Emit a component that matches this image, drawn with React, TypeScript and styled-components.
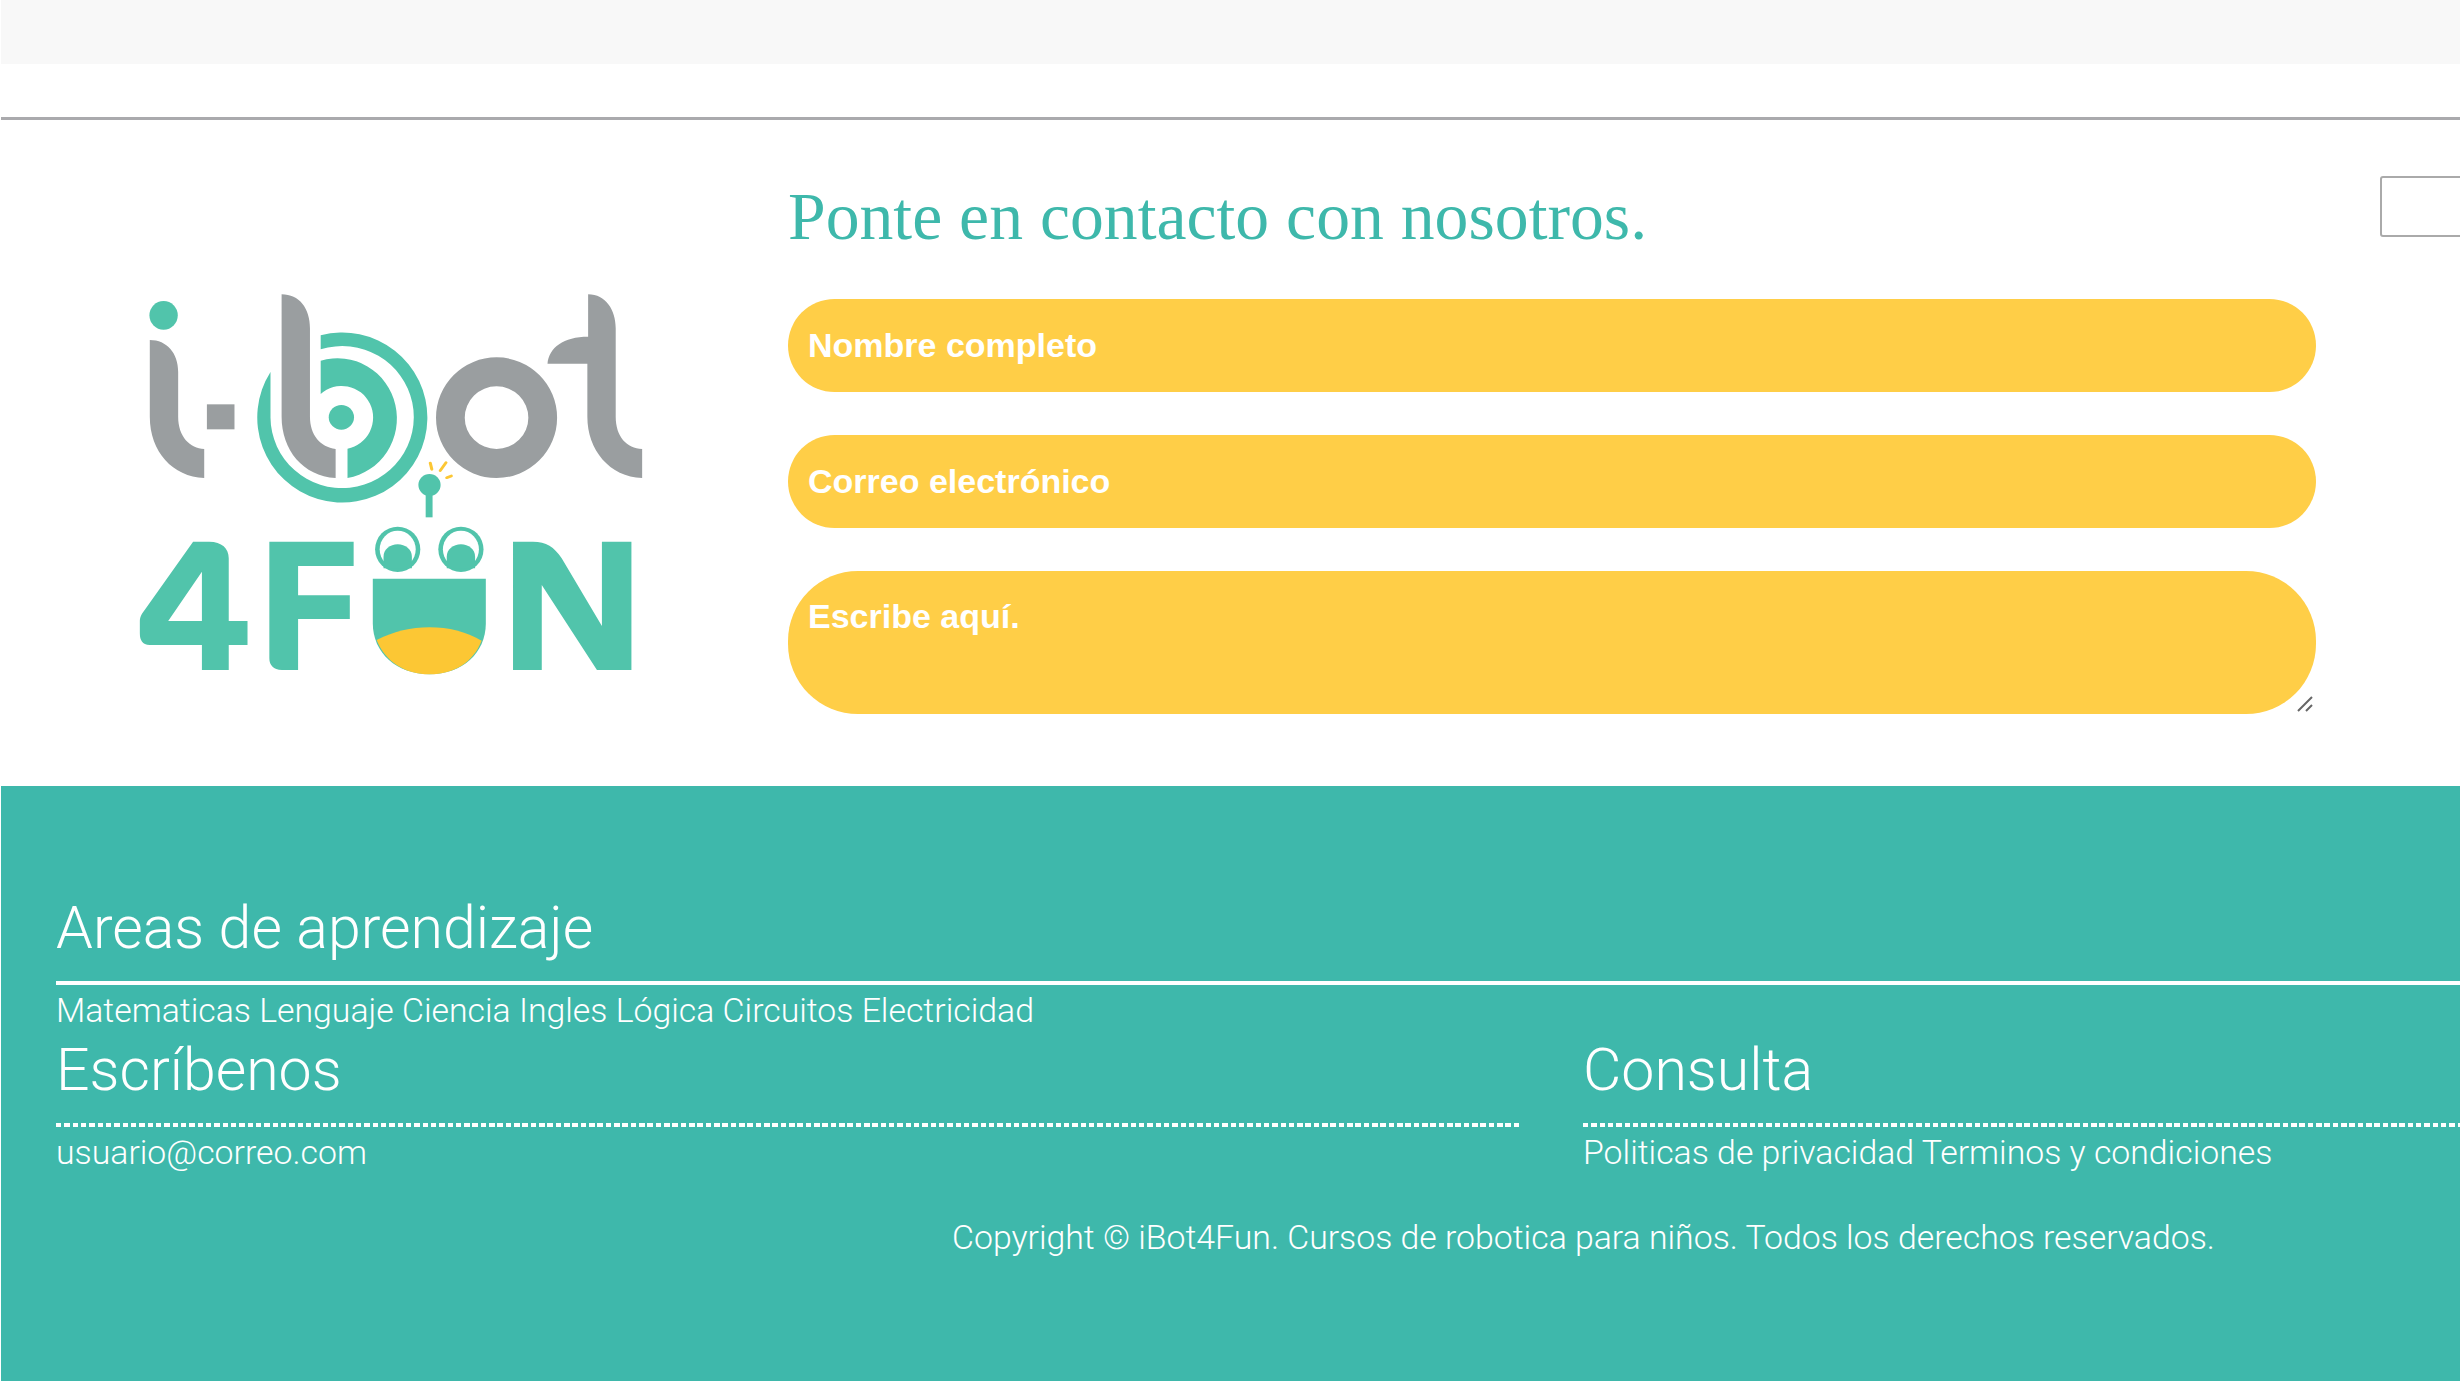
import React from "react";
import styled, { createGlobalStyle } from "styled-components";

const Global = createGlobalStyle`
  html, body { margin: 0; padding: 0; background: #fff; }
  body { overflow: hidden; }
  #root { width: 2460px; height: 1386px; overflow: hidden; }
  * { box-sizing: border-box; }
`;

const Page = styled.div`
  width: 2460px;
  height: 1386px;
  padding-left: 1px;
  overflow: hidden;
  background: #fff;
  display: flex;
  flex-direction: column;
`;
const TopBar = styled.div`
  height: 64px;
  flex: none;
  background: #f8f8f8;
`;
const Rule = styled.hr`
  flex: none;
  height: 3px;
  margin: 53px 0 0;
  border: 0;
  background: #aaaaad;
`;
const Contact = styled.section`
  flex: none;
  height: 666px;
  display: flex;
  align-items: flex-start;
`;
const LogoColumn = styled.div`
  flex: none;
  width: 787px;
  padding: 140px 0 0 99px;
`;
const Logo = styled.svg`
  display: block;
  width: 600px;
  height: 440px;
`;
const FormColumn = styled.form`
  flex: none;
  width: 1528px;
  padding-top: 50px;
  display: flex;
  flex-direction: column;
`;
const Title = styled.h2`
  margin: 0 0 35px;
  font: 400 67.7px/94px "Liberation Serif", serif;
  color: #3eb8ab;
  white-space: nowrap;
`;
const fieldCss = `
  display: block;
  width: 100%;
  border: 0;
  outline: 0;
  background: #ffce47;
  color: #fff;
  font: 700 34px/38px "Liberation Sans", Arial, sans-serif;
  padding: 0 20px;
  border-radius: 70px;
  &::placeholder { color: #fff; opacity: 1; }
`;
const Field = styled.input`
  ${fieldCss}
  height: 93px;
  margin-bottom: 43px;
`;
const AreaWrap = styled.div`
  position: relative;
`;
const Area = styled.textarea`
  ${fieldCss}
  height: 143px;
  padding-top: 26px;
  resize: none;
`;
const Grip = styled.svg`
  position: absolute;
  right: 2px;
  bottom: 1px;
  width: 18px;
  height: 18px;
`;
const SideBox = styled.div`
  flex: none;
  width: 200px;
  height: 61px;
  margin: 56px 0 0 64px;
  border: 2px solid #aaa;
  border-radius: 3px;
  background: #fff;
`;
const Footer = styled.footer`
  flex: none;
  height: 595px;
  background: #3eb8ab;
  color: #fff;
  font-family: Roboto, sans-serif;
  font-weight: 300;
  padding: 109px 0 0 55px;
  overflow: hidden;
`;
const Heading = styled.h3`
  margin: 0;
  font-size: 59px;
  font-weight: 300;
  line-height: 66px;
  white-space: nowrap;
  padding-bottom: 20px;
  border-bottom: 4px solid #fff;
`;
const DottedHeading = styled(Heading)`
  padding-bottom: 24px;
  border-bottom: 0;
  background: repeating-linear-gradient(90deg, #fff 0 5.5px, transparent 5.5px 8.33px) left bottom / 100% 4px no-repeat;
`;
const Links = styled.p`
  margin: 0;
  font-size: 33.8px;
  line-height: 52px;
  white-space: nowrap;
`;
const Columns = styled.div`
  display: flex;
  gap: 62px;
`;
const Column = styled.div<{ $w: number }>`
  flex: none;
  width: ${(p) => p.$w}px;
`;
const Copyright = styled.p`
  margin: 33px 0 0 896px;
  font-size: 33.8px;
  line-height: 52px;
  white-space: nowrap;
`;

const TEAL = "#51c4ab";
const GRAY = "#9a9ea0";
const YELLOW = "#fcc734";

const LogoArt = () => (
  <Logo viewBox="0 0 1566 1320" preserveAspectRatio="none" aria-label="i-bot 4FUN">
    <g fill={GRAY}>
      <path d="M130 240C175 240 204 280 204 335V470C204 530 235 565 272 567V654C190 650 130 575 130 470Z" />
      <rect x="279" y="433" width="72" height="75" />
      <path d="M474 103C520 103 548 145 548 205V470C548 525 575 560 615 567V654C530 648 474 570 474 470Z" />
      <path fillRule="evenodd" d="M877 473a158 181 0 1 0 316 0a158 181 0 1 0-316 0ZM952 473a83 94 0 1 1 166 0a83 94 0 1 1-166 0Z" />
      <path d="M1274 103C1320 103 1346 150 1346 205V470C1346 530 1375 565 1415 567V654C1330 650 1272 570 1272 470V311H1168C1172 262 1210 230 1274 230Z" />
    </g>
    <g fill={TEAL}>
      <ellipse cx="166" cy="166" rx="37" ry="43" />
      <path d="M576 226A222 255 0 1 1 445 336V473A187 213 0 1 0 576 268Z" />
      <path d="M576 302A155 181 0 1 1 646 654V566A82 95 0 1 0 576 402Z" />
      <ellipse cx="630" cy="472" rx="33" ry="37" />
      <ellipse cx="860" cy="675" rx="29" ry="33" />
      <rect x="850" y="700" width="18" height="72" />
      <path fillRule="evenodd" d="M243 845H285C318 845 336 865 336 895V1083H385V1155H336V1230H266V1155H130C110 1155 104 1140 104 1120V1085C104 1070 110 1060 118 1048ZM266 935L178 1083H266Z" />
      <path d="M442 845H662V918H517V1006H652V1077H517V1230H475C452 1230 442 1215 442 1195Z" />
      <path d="M712 956H1007V1090C1007 1180 945 1243 860 1243C775 1243 712 1180 712 1090Z" />
      <path d="M1078 845H1130C1165 845 1185 860 1205 895L1310 1098V845H1387V1230H1297L1153 975V1230H1078Z" />
    </g>
    <path fill={YELLOW} d="M722 1140C770 1113 810 1102 860 1102C910 1102 955 1115 996 1142C975 1205 925 1243 860 1243C795 1243 745 1205 722 1140Z" />
    <g stroke={YELLOW} strokeWidth="8" strokeLinecap="round">
      <path d="M862 609L866 628M903 608L888 632M905 653L917 648" />
    </g>
    {[777, 942].map((cx) => (
      <g key={cx}>
        <ellipse cx={cx} cy="868" rx="59" ry="68" fill={TEAL} />
        <ellipse cx={cx} cy="868" rx="47" ry="56" fill="#fff" />
        <path fill={TEAL} d={`M${cx - 37} 925V890C${cx - 37} 868 ${cx - 20} 853 ${cx} 853C${cx + 20} 853 ${cx + 37} 868 ${cx + 37} 890V925Z`} />
      </g>
    ))}
  </Logo>
);

export default function App() {
  return (
    <Page>
      <Global />
      <TopBar />
      <Rule />
      <Contact>
        <LogoColumn>
          <LogoArt />
        </LogoColumn>
        <FormColumn>
          <Title>Ponte en contacto con nosotros.</Title>
          <Field placeholder="Nombre completo" />
          <Field placeholder="Correo electrónico" />
          <AreaWrap>
            <Area placeholder="Escribe aquí." />
            <Grip viewBox="0 0 18 18">
              <path d="M2 16L16 2M10 16L16 10" stroke="#666" strokeWidth="2" fill="none" />
            </Grip>
          </AreaWrap>
        </FormColumn>
        <SideBox />
      </Contact>
      <Footer>
        <Heading>Areas de aprendizaje</Heading>
        <Links>Matematicas Lenguaje Ciencia Ingles Lógica Circuitos Electricidad</Links>
        <Columns>
          <Column $w={1465}>
            <DottedHeading>Escríbenos</DottedHeading>
            <Links>usuario@correo.com</Links>
          </Column>
          <Column $w={1000}>
            <DottedHeading>Consulta</DottedHeading>
            <Links>Politicas de privacidad Terminos y condiciones</Links>
          </Column>
        </Columns>
        <Copyright>Copyright © iBot4Fun. Cursos de robotica para niños. Todos los derechos reservados.</Copyright>
      </Footer>
    </Page>
  );
}
